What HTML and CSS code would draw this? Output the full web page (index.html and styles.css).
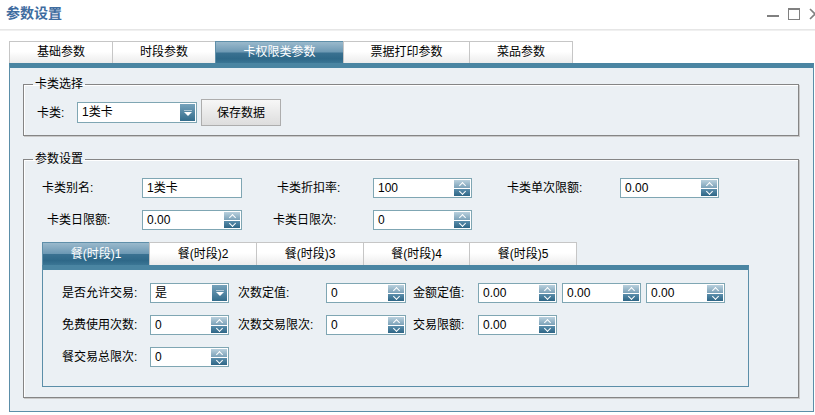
FILE: index.html
```html
<!DOCTYPE html>
<html lang="zh-CN">
<head>
<meta charset="utf-8">
<title>参数设置</title>
<link rel="stylesheet" href="styles.css">
</head>
<body>
<header class="titlebar">
  <h1 class="title">参数设置</h1>
  <div class="win-tools">
    <svg class="tool" width="12" height="12" viewBox="0 0 12 12"><rect x="0" y="7" width="12" height="2" fill="#808080"/></svg>
    <svg class="tool" width="12" height="12" viewBox="0 0 12 12"><rect x="0.5" y="0.5" width="11" height="11" fill="none" stroke="#808080"/><rect x="0" y="0" width="12" height="2" fill="#808080"/></svg>
    <svg class="tool" width="12" height="12" viewBox="0 0 12 12"><path d="M1 1 L11 11 M11 1 L1 11" stroke="#808080" stroke-width="1.6" fill="none"/></svg>
  </div>
</header>
<div class="title-rule"></div>

<div class="main-tabs">
  <ul class="tabs">
    <li class="tab w104">基础参数</li>
    <li class="tab w104">时段参数</li>
    <li class="tab w129 active">卡权限类参数</li>
    <li class="tab w127">票据打印参数</li>
    <li class="tab w104">菜品参数</li>
  </ul>
  <div class="tab-panel">
    <fieldset class="group group-card">
      <legend>卡类选择</legend>
      <div class="group-body card-body">
        <span class="card-lbl">卡类:</span>
        <div class="combo w120"><span class="val">1类卡</span><span class="drop"></span></div>
        <button class="btn" type="button">保存数据</button>
      </div>
    </fieldset>

    <fieldset class="group group-params">
      <legend>参数设置</legend>
      <div class="group-body params-body">
        <div class="param-grid">
          <span class="lbl">卡类别名:</span>
          <div class="spin"><span class="val">1类卡</span></div>
          <span class="lbl p35">卡类折扣率:</span>
          <div class="spin"><span class="val">100</span><span class="arrows"><i class="up"></i><i class="dn"></i></span></div>
          <span class="lbl p35">卡类单次限额:</span>
          <div class="spin"><span class="val">0.00</span><span class="arrows"><i class="up"></i><i class="dn"></i></span></div>

          <span class="lbl p5">卡类日限额:</span>
          <div class="spin"><span class="val">0.00</span><span class="arrows"><i class="up"></i><i class="dn"></i></span></div>
          <span class="lbl p31">卡类日限次:</span>
          <div class="spin"><span class="val">0</span><span class="arrows"><i class="up"></i><i class="dn"></i></span></div>
        </div>

        <div class="sub-tabs">
          <ul class="tabs small">
            <li class="tab w108 active">餐(时段)1</li>
            <li class="tab w108">餐(时段)2</li>
            <li class="tab w108">餐(时段)3</li>
            <li class="tab w107">餐(时段)4</li>
            <li class="tab w108">餐(时段)5</li>
          </ul>
          <div class="sub-panel">
            <div class="meal-grid">
              <span class="lbl">是否允许交易:</span>
              <div class="combo"><span class="val">是</span><span class="drop"></span></div>
              <span class="lbl">次数定值:</span>
              <div class="spin"><span class="val">0</span><span class="arrows"><i class="up"></i><i class="dn"></i></span></div>
              <span class="lbl tight">金额定值:</span>
              <div class="spin"><span class="val">0.00</span><span class="arrows"><i class="up"></i><i class="dn"></i></span></div>
              <div class="spin end"><span class="val">0.00</span><span class="arrows"><i class="up"></i><i class="dn"></i></span></div>
              <div class="spin end"><span class="val">0.00</span><span class="arrows"><i class="up"></i><i class="dn"></i></span></div>

              <span class="lbl">免费使用次数:</span>
              <div class="spin"><span class="val">0</span><span class="arrows"><i class="up"></i><i class="dn"></i></span></div>
              <span class="lbl">次数交易限次:</span>
              <div class="spin"><span class="val">0</span><span class="arrows"><i class="up"></i><i class="dn"></i></span></div>
              <span class="lbl tight">交易限额:</span>
              <div class="spin"><span class="val">0.00</span><span class="arrows"><i class="up"></i><i class="dn"></i></span></div>
              <span class="filler"></span>
              <span class="filler"></span>

              <span class="lbl">餐交易总限次:</span>
              <div class="spin"><span class="val">0</span><span class="arrows"><i class="up"></i><i class="dn"></i></span></div>
            </div>
          </div>
        </div>
      </div>
    </fieldset>
  </div>
</div>
</body>
</html>
```

FILE: styles.css
```css
* { box-sizing: border-box; }
html, body { margin: 0; padding: 0; }
body {
  width: 815px;
  height: 415px;
  overflow: hidden;
  background: #fff;
  color: #000;
  font: 12px/16px "Liberation Sans", "Noto Sans CJK SC", sans-serif;
}

/* title bar */
.titlebar {
  height: 29px;
  display: flex;
  justify-content: space-between;
  align-items: flex-start;
  padding-left: 6px;
}
.title {
  margin: 0;
  font-size: 14px;
  font-weight: bold;
  line-height: 26px;
  color: #3f6c9f;
}
.win-tools {
  display: flex;
  gap: 9px;
  margin-top: 8px;
  margin-right: -6px;
}
.tool { display: block; }
.title-rule {
  height: 2px;
  background: linear-gradient(#e1e1e1, #f5f5f5);
}

/* tabs */
.main-tabs {
  margin: 10px 0 0 9px;
  width: 805px;
}
.tabs {
  display: flex;
  margin: 0;
  padding: 0;
  list-style: none;
}
.tab {
  height: 22px;
  line-height: 21px;
  text-align: center;
  border: 1px solid #c6c6c6;
  border-bottom: none;
  background: linear-gradient(#ffffff, #ffffff 45%, #ececec);
  margin-left: -1px;
}
.tab:first-child { margin-left: 0; }
.tab.active {
  color: #fff;
  border-color: #5f8fa9;
  background: linear-gradient(#9ab9cc 0%, #6d99b4 48%, #3a7191 52%, #2e6888 80%, #3b7695 100%);
}
.small .tab { height: 23px; line-height: 22px; }
.w104 { width: 104px; }
.w127 { width: 127px; }
.w129 { width: 129px; }
.w107 { width: 107px; }
.w108 { width: 108px; }
.w120 { width: 120px; }

.tab-panel {
  border: 1px solid #5b8ea8;
  border-top: 5px solid #4a85a2;
  background: #ebf0f4;
  padding: 8px 14px 9px 13px;
  height: 349px;
}

/* groups */
.group {
  margin: 0;
  padding: 0;
  border: 1px solid #858585;
  box-shadow: 1px 1px 0 #c9c9c9, inset 1px 1px 0 #fff;
  min-width: 0;
}
.group legend {
  margin-left: 9px;
  padding: 0 2px;
  line-height: 16px;
}
.group-params { margin-top: 15px; }

.card-body {
  display: flex;
  align-items: center;
  padding: 7px 0 9px 13px;
}
.card-lbl { width: 40px; }

.btn {
  width: 80px;
  height: 27px;
  margin-left: 4px;
  padding: 0;
  border: 1px solid #adadad;
  background: linear-gradient(#f7f7f7, #dddddd);
  font: inherit;
  color: #000;
}

.params-body { padding: 11px 0 10px 18px; }

.param-grid {
  display: grid;
  grid-template-columns: 100px 100px 131px 99px 148px 99px;
  grid-auto-rows: 20px;
  row-gap: 12px;
}
.lbl { line-height: 20px; white-space: nowrap; }
.p5 { padding-left: 5px; }
.p31 { padding-left: 31px; }
.p35 { padding-left: 35px; }

/* inputs */
.spin, .combo {
  display: flex;
  height: 20px;
  border: 1px solid #7fa6b3;
  background: #fff;
}
.combo.w120 { height: 21px; }
.val {
  flex: 1;
  padding-left: 4px;
  line-height: 18px;
  white-space: nowrap;
  overflow: hidden;
}
.combo.w120 .val { line-height: 19px; }
.arrows {
  display: flex;
  flex-direction: column;
  gap: 1px;
  padding: 1px;
}
.arrows i {
  display: block;
  width: 16px;
  height: 8px;
  position: relative;
  overflow: hidden;
}
.arrows .up { background: linear-gradient(#b9d0dd, #7ba1b8); }
.arrows .dn { background: linear-gradient(#5a8dab, #2e6686); }
.arrows i::before {
  content: "";
  position: absolute;
  left: 6px;
  width: 4px;
  height: 4px;
  border-style: solid;
  border-color: #fff;
  border-width: 1.5px 0 0 1.5px;
}
.arrows .up::before { top: 3px; transform: rotate(45deg); }
.arrows .dn::before { top: 0px; transform: rotate(225deg); }

.drop {
  width: 15px;
  margin: 1px;
  position: relative;
  background: linear-gradient(#76a2bb, #346d8c);
}
.drop::before {
  content: "";
  position: absolute;
  left: 4px;
  top: 50%;
  margin-top: -1px;
  border-left: 4px solid transparent;
  border-right: 4px solid transparent;
  border-top: 4px solid #fff;
}
.drop::after {
  content: "";
  position: absolute;
  left: 4px;
  width: 8px;
  top: 50%;
  margin-top: -3px;
  height: 1px;
  background: rgba(255,255,255,0.5);
}

/* sub tabs */
.sub-tabs {
  margin-top: 12px;
  width: 707px;
}
.sub-panel {
  border: 1px solid #5b8ea8;
  border-top: 5px solid #4a85a2;
  padding: 13px 0 19px 10px;
}
.meal-grid {
  display: grid;
  grid-template-columns: 97px 79px 97px 80px 72px 79px 84px 84px;
  grid-auto-rows: 20px;
  row-gap: 12px;
}
.meal-grid .lbl { padding-left: 9px; }
.meal-grid .lbl.tight { padding-left: 7px; }
.spin.end { width: 79px; justify-self: end; }
```
